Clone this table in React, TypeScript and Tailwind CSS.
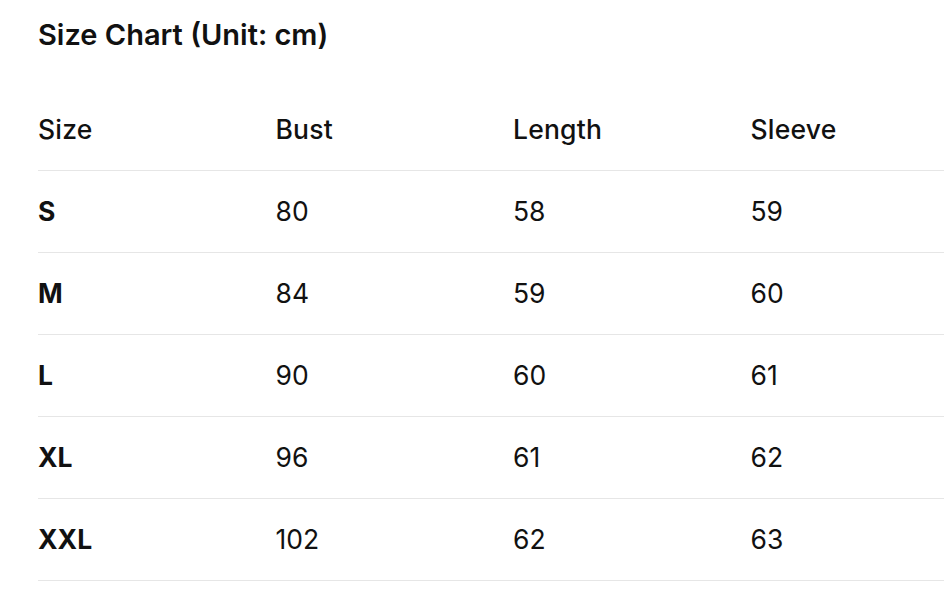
const headers = ["Size", "Bust", "Length", "Sleeve"];

const rows = [
  ["S", "80", "58", "59"],
  ["M", "84", "59", "60"],
  ["L", "90", "60", "61"],
  ["XL", "96", "61", "62"],
  ["XXL", "102", "62", "63"],
];

export default function App() {
  return (
    <div className="w-[944px] h-[594px] overflow-hidden bg-white text-[#111111] font-['Inter',sans-serif]">
      <div className="pl-[38px]">
        <h2 className="pt-[15px] h-[88px] text-[29px] leading-[40px] font-semibold">Size Chart (Unit: cm)</h2>
        <table className="w-[950px] border-collapse text-left">
          <thead>
            <tr className="h-[82px] border-b border-[#e6e6e6]">
              {headers.map((h) => (
                <th key={h} className="w-[237.5px] p-0 pt-[3px] text-[26.5px] tracking-[0.2px] font-medium">{h}</th>
              ))}
            </tr>
          </thead>
          <tbody>
            {rows.map((r) => (
              <tr key={r[0]} className="h-[82px] border-b border-[#e6e6e6]">
                {r.map((c, i) => (
                  <td key={i} className={`p-0 pt-[1px] text-[26.5px] ${i === 0 ? "font-bold" : "font-normal"}`}>{c}</td>
                ))}
              </tr>
            ))}
          </tbody>
        </table>
      </div>
    </div>
  );
}
